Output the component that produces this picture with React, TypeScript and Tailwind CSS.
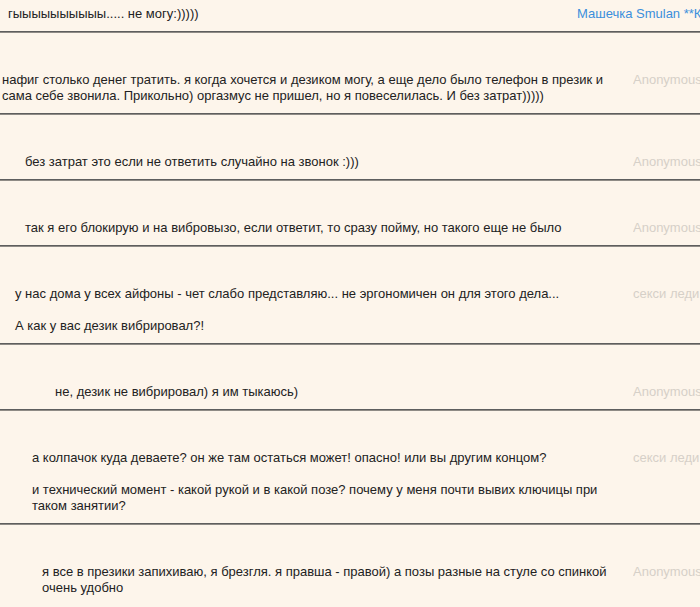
import React from 'react';

type Comment = {
  indent: string;
  author: string;
  paragraphs: string[];
};

const comments: Comment[] = [
  {
    indent: 'pl-[2px]',
    author: 'Anonymous',
    paragraphs: [
      'нафиг столько денег тратить. я когда хочется и дезиком могу, а еще дело было телефон в презик и сама себе звонила. Прикольно) оргазмус не пришел, но я повеселилась. И без затрат)))))',
    ],
  },
  {
    indent: 'pl-[25px]',
    author: 'Anonymous',
    paragraphs: ['без затрат это если не ответить случайно на звонок :)))'],
  },
  {
    indent: 'pl-[25px]',
    author: 'Anonymous',
    paragraphs: ['так я его блокирую и на вибровызо, если ответит, то сразу пойму, но такого еще не было'],
  },
  {
    indent: 'pl-[15px]',
    author: 'секси леди',
    paragraphs: [
      'у нас дома у всех айфоны - чет слабо представляю... не эргономичен он для этого дела...',
      'А как у вас дезик вибрировал?!',
    ],
  },
  {
    indent: 'pl-[55px]',
    author: 'Anonymous',
    paragraphs: ['не, дезик не вибрировал) я им тыкаюсь)'],
  },
  {
    indent: 'pl-[32px]',
    author: 'секси леди',
    paragraphs: [
      'а колпачок куда деваете? он же там остаться может! опасно! или вы другим концом?',
      'и технический момент - какой рукой и в какой позе? почему у меня почти вывих ключицы при таком занятии?',
    ],
  },
  {
    indent: 'pl-[42px]',
    author: 'Anonymous',
    paragraphs: [
      'я все в презики запихиваю, я брезгля. я правша - правой) а позы разные на стуле со спинкой очень удобно',
    ],
  },
];

function Divider() {
  return <div className="h-[2px] border-t border-[#5e5e5e] border-b border-b-[#8f8b86]" />;
}

export default function App() {
  return (
    <div
      className="w-[700px] h-[607px] overflow-hidden bg-[#fdf5eb] text-[13px] leading-[16px] text-[#222]"
      style={{ fontFamily: '"Liberation Sans", Arial, sans-serif' }}
    >
      {/* first (cut) comment */}
      <div className="flex h-[31px] items-start pt-[6px]">
        <div className="flex-1 pl-[8px]">гыыыыыыыыыы..... не могу:)))))</div>
        <div className="w-[123px] whitespace-nowrap overflow-hidden text-[#3b8fdc]">
          Машечка Smulan **Кошечка**
        </div>
      </div>
      <Divider />

      {comments.map((c, i) => (
        <React.Fragment key={i}>
          <div className="grid grid-cols-[1fr_67px] gap-[15px] pt-[39px] pb-[9px]">
            <div className={`${c.indent} space-y-[16px]`}>
              {c.paragraphs.map((p, j) => (
                <p key={j}>{p}</p>
              ))}
            </div>
            <div className="whitespace-nowrap overflow-hidden text-[#d6d0c8]">{c.author}</div>
          </div>
          {i < comments.length - 1 && <Divider />}
        </React.Fragment>
      ))}
    </div>
  );
}
